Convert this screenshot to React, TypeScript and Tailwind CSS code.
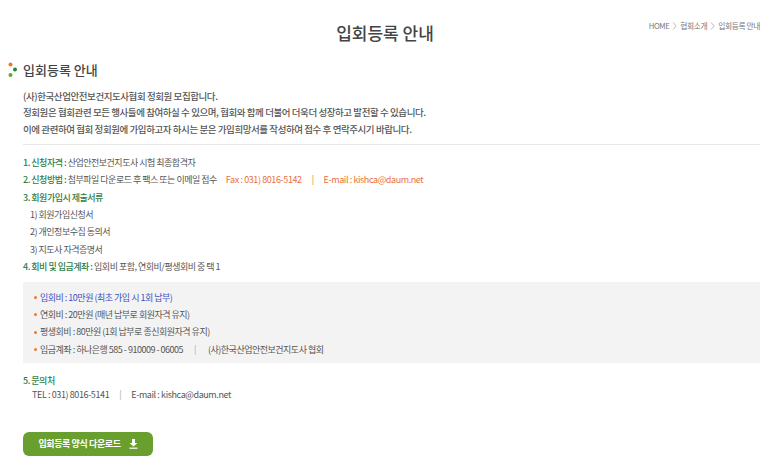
const font = "font-['Noto_Sans_CJK_KR','Noto_Sans',sans-serif]";

function Row({ children, className = "" }: { children: React.ReactNode; className?: string }) {
  return <p className={`h-[17.4px] leading-[17.4px] whitespace-nowrap ${className}`}>{children}</p>;
}

function Label({ children }: { children: React.ReactNode }) {
  return <span className="font-medium text-[#2e7d46]">{children}</span>;
}

function Bullet({ children, className = "" }: { children: React.ReactNode; className?: string }) {
  return (
    <li className={`flex h-[17.4px] items-center gap-[3px] whitespace-nowrap ${className}`}>
      <span className="h-[3px] w-[3px] rounded-full bg-[#ec7a2c]" />
      <span>{children}</span>
    </li>
  );
}

function Chevron() {
  return (
    <svg width="5" height="8" viewBox="0 0 5 8" fill="none" stroke="#999" strokeWidth="0.7">
      <path d="M1 .5 4.2 4 1 7.5" />
    </svg>
  );
}

export default function App() {
  return (
    <div className={`${font} h-[469px] w-[773px] overflow-hidden bg-white text-[9px] tracking-[-0.5px] text-[#555]`}>
      <header className="relative h-[55px] pt-[19px] pr-[3px] text-center">
        <h1 className="text-[17px] leading-[27px] font-medium tracking-normal text-[#444]">입회등록 안내</h1>
        <div className="absolute top-[20px] right-[13px] flex items-center gap-[3px] text-[7.75px] tracking-[-0.4px] text-[#777]">
          <span>HOME</span>
          <Chevron />
          <span>협회소개</span>
          <Chevron />
          <span>입회등록 안내</span>
        </div>
      </header>

      <section className="pl-[8px]">
        <div className="flex h-[30px] items-center gap-[6px]">
          <svg width="9" height="17" viewBox="0 0 9 17">
            <circle cx="2.5" cy="2.5" r="2" fill="#ec7a2c" />
            <circle cx="7" cy="7.5" r="2" fill="#1f8a3c" />
            <circle cx="2.5" cy="13" r="2" fill="#6ba32e" />
          </svg>
          <h2 className="text-[13px] font-medium tracking-normal text-[#444]">입회등록 안내</h2>
        </div>
      </section>

      <main className="mr-[13px] ml-[23px]">
        <div className="border-b border-[#e8e8e8] pt-[3px] pb-[7px] text-[9.5px] leading-[16.3px] font-medium tracking-[-0.43px] text-[#555]">
          <p>(사)한국산업안전보건지도사협회 정회원 모집합니다.</p>
          <p>정회원은 협회관련 모든 행사들에 참여하실 수 있으며, 협회와 함께 더불어 더욱더 성장하고 발전할 수 있습니다.</p>
          <p>이에 관련하여 협회 정회원에 가입하고자 하시는 분은 가입희망서를 작성하여 접수 후 연락주시기 바랍니다.</p>
        </div>

        <div className="pt-[9px]">
          <Row><Label>1. 신청자격 :</Label> 산업안전보건지도사 시험 최종합격자</Row>
          <Row>
            <Label>2. 신청방법 :</Label> 첨부파일 다운로드 후 팩스 또는 이메일 접수
            <span className="ml-[9px] tracking-[-0.4px] text-[#e9703a]">Fax : 031) 8016-5142</span>
            <span className="mx-[10px] text-[#e9703a]">|</span>
            <span className="tracking-[-0.4px] text-[#e9703a]">E-mail : kishca@daum.net</span>
          </Row>
          <Row><Label>3. 회원가입시 제출서류</Label></Row>
          <Row className="pl-[7px]">1) 회원가입신청서</Row>
          <Row className="pl-[7px]">2) 개인정보수집 동의서</Row>
          <Row className="pl-[7px]">3) 지도사 자격증명서</Row>
          <Row><Label>4. 회비 및 입금계좌 :</Label> 입회비 포함, 연회비/평생회비 중 택 1</Row>
        </div>

        <ul className="mt-[6px] bg-[#f3f3f3] px-[11px] pt-[7px] pb-[5px]">
          <Bullet className="text-[#3f51c4]">입회비 : 10만원 (최초 가입 시 1회 납부)</Bullet>
          <Bullet>연회비 : 20만원 (매년 납부로 회원자격 유지)</Bullet>
          <Bullet>평생회비 : 80만원 (1회 납부로 종신회원자격 유지)</Bullet>
          <Bullet>
            입금계좌 : 하나은행 585 - 910009 - 06005
            <span className="mr-[12px] ml-[11px] text-[#aaa]">|</span>
            (사)한국산업안전보건지도사 협회
          </Bullet>
        </ul>

        <div className="pt-[11px]">
          <p className="leading-[14px]"><Label>5. 문의처</Label></p>
          <p className="pl-[9px] leading-[13px] tracking-[-0.4px]">
            TEL : 031) 8016-5141
            <span className="mx-[10px] text-[#aaa]">|</span>
            E-mail : kishca@daum.net
          </p>
        </div>

        <button className="mt-[31px] flex h-[24px] w-[130px] items-center justify-center gap-[8px] rounded-[6px] bg-[#689f2e] text-[9px] font-bold tracking-[-0.4px] text-white">
          입회등록 양식 다운로드
          <svg width="9" height="10" viewBox="0 0 9 10" fill="white">
            <path d="M3 0h3v4h2.4L4.5 7.6.6 4H3z" />
            <rect x="0.5" y="8.6" width="8" height="1.2" />
          </svg>
        </button>
      </main>
    </div>
  );
}
